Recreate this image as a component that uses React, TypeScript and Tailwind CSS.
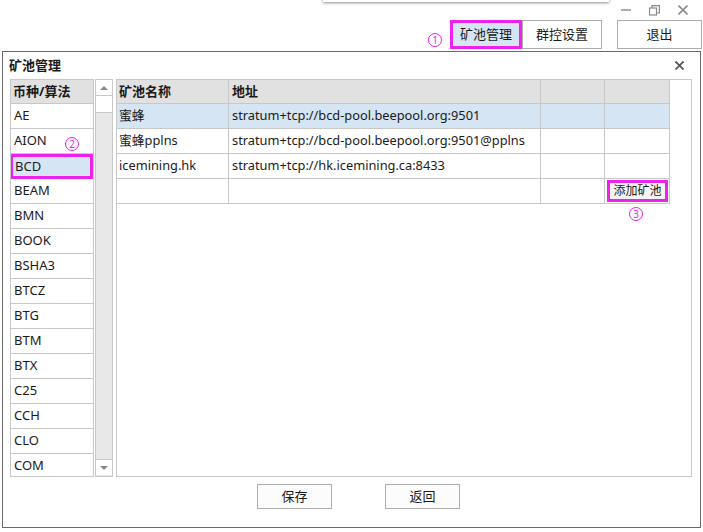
// Pool management dialog (矿池管理)

const coins = ['AE', 'AION', 'BCD', 'BEAM', 'BMN', 'BOOK', 'BSHA3', 'BTCZ', 'BTG', 'BTM', 'BTX', 'C25', 'CCH', 'CLO', 'COM']

const pools = [
  { name: '蜜蜂', url: 'stratum+tcp://bcd-pool.beepool.org:9501' },
  { name: '蜜蜂pplns', url: 'stratum+tcp://bcd-pool.beepool.org:9501@pplns' },
  { name: 'icemining.hk', url: 'stratum+tcp://hk.icemining.ca:8433' },
]

const font = "font-['Noto_Sans','Noto_Sans_CJK_SC',sans-serif]"

function Circled({ n, className }: { n: string; className: string }) {
  return (
    <span
      className={`absolute w-[14px] h-[14px] rounded-full border border-[#e81ee8] text-[#e81ee8] text-[10px] leading-[12px] text-center ${className}`}
    >
      {n}
    </span>
  )
}

export default function App() {
  return (
    <div className={`w-[703px] h-[532px] bg-white relative overflow-hidden text-[#1a1a1a] ${font}`}>
      {/* dropdown shadow from above */}
      <div className="absolute left-[323px] top-[-4px] w-[286px] h-[6px] bg-white shadow-[0_1px_3px_rgba(0,0,0,0.45)]" />

      {/* window caption controls */}
      <div className="h-[20px] flex justify-end items-center gap-[18px] pr-[15px] text-[#8a8a8a]">
        <svg width="10" height="10" viewBox="0 0 10 10">
          <line x1="0" y1="5" x2="10" y2="5" stroke="currentColor" strokeWidth="1.4" />
        </svg>
        <svg width="11" height="11" viewBox="0 0 11 11" fill="none" stroke="currentColor" strokeWidth="1.2">
          <rect x="0.5" y="3" width="7" height="7" />
          <path d="M3 3V0.6h7.4V8H7.5" />
        </svg>
        <svg width="10" height="10" viewBox="0 0 10 10" stroke="currentColor" strokeWidth="1.6">
          <line x1="0.5" y1="0.5" x2="9.5" y2="9.5" />
          <line x1="9.5" y1="0.5" x2="0.5" y2="9.5" />
        </svg>
      </div>

      {/* top buttons */}
      <div className="relative h-[31px] flex justify-end items-start pr-[1px] text-[13px]">
        <Circled n="1" className="left-[428px] top-[13px]" />
        <button className="w-[72px] h-[29px] border-[3px] border-[#ee22ee] bg-[#d5e5f3]">矿池管理</button>
        <button className="w-[80px] h-[29px] border border-[#acacac] bg-white">群控设置</button>
        <button className="ml-[15px] w-[85px] h-[29px] border border-[#acacac] bg-white">退出</button>
      </div>

      {/* dialog */}
      <div className="relative ml-[2px] w-[699px] h-[477px] border border-[#6a6a6a] bg-white flex flex-col">
        <div className="h-[27px] flex items-center justify-between pl-[6px] pr-[16px]">
          <span className="text-[13px] font-bold">矿池管理</span>
          <svg width="9" height="9" viewBox="0 0 9 9" stroke="#555" strokeWidth="1.8">
            <line x1="0.5" y1="0.5" x2="8.5" y2="8.5" />
            <line x1="8.5" y1="0.5" x2="0.5" y2="8.5" />
          </svg>
        </div>

        <div className="flex pl-[7px] h-[398px]">
          {/* coin list */}
          <div className="w-[84px] h-[398px] border border-[#c8c8c8] overflow-hidden text-[13px]">
            <div className="h-[24px] bg-[#e1e1e1] border-b border-[#c8c8c8] flex items-center pl-[2px] font-bold">
              币种/算法
            </div>
            {coins.map((c) => (
              <div
                key={c}
                className={
                  c === 'BCD'
                    ? 'h-[25px] flex items-center pl-[2px] bg-[#d5e5f3] border-[3px] border-[#ee22ee] -ml-px'
                    : 'h-[25px] flex items-center pl-[3px] border-b border-[#c8c8c8]'
                }
              >
                {c}
              </div>
            ))}
          </div>
          {/* scrollbar */}
          <div className="ml-px w-[18px] h-[398px] bg-[#e8e8e8] border border-[#c8c8c8] flex flex-col justify-between">
            <div>
              <div className="h-[16px] bg-white border-b border-[#c8c8c8] flex items-center justify-center">
                <div className="w-0 h-0 border-x-[4px] border-x-transparent border-b-[4px] border-b-[#888]" />
              </div>
              <div className="h-[17px] bg-white border-b border-[#c8c8c8]" />
            </div>
            <div className="h-[16px] bg-white border-t border-[#c8c8c8] mb-px flex items-center justify-center">
              <div className="w-0 h-0 border-x-[4px] border-x-transparent border-t-[4px] border-t-[#888]" />
            </div>
          </div>

          {/* pool table */}
          <div className="relative ml-[3px] w-[576px] h-[398px] border border-[#c8c8c8] text-[12.8px]">
            <div className="w-[553px]">
              <div className="h-[24px] flex bg-[#e1e1e1] border-b border-[#c8c8c8] font-bold text-[13px]">
                <div className="w-[112px] border-r border-[#c8c8c8] flex items-center pl-[2px]">矿池名称</div>
                <div className="w-[312px] border-r border-[#c8c8c8] flex items-center pl-[3px]">地址</div>
                <div className="w-[64px] border-r border-[#c8c8c8]" />
                <div className="w-[65px] border-r border-[#c8c8c8]" />
              </div>
              {pools.map((p, i) => (
                <div key={p.url} className={`h-[25px] flex border-b border-[#c8c8c8] ${i === 0 ? 'bg-[#d5e5f3]' : ''}`}>
                  <div className="w-[112px] border-r border-[#c8c8c8] flex items-center pl-[2px]">{p.name}</div>
                  <div className="w-[312px] border-r border-[#c8c8c8] flex items-center pl-[3px]">{p.url}</div>
                  <div className="w-[64px] border-r border-[#c8c8c8]" />
                  <div className="w-[65px] border-r border-[#c8c8c8]" />
                </div>
              ))}
              <div className="h-[25px] flex border-b border-[#c8c8c8]">
                <div className="w-[112px] border-r border-[#c8c8c8]" />
                <div className="w-[312px] border-r border-[#c8c8c8]" />
                <div className="w-[64px] border-r border-[#c8c8c8]" />
                <div className="w-[65px] border-r border-[#c8c8c8] flex items-center justify-end pr-px">
                  <button className="w-[61px] h-[22px] border-[3px] border-[#ee22ee] bg-[#f5f5f5] text-[12px] leading-none">
                    添加矿池
                  </button>
                </div>
              </div>
            </div>
            <Circled n="3" className="left-[512px] top-[127px]" />
          </div>
        </div>
        <Circled n="2" className="left-[62px] top-[85px]" />

        {/* bottom buttons */}
        <div className="flex pl-[254px] pt-[7px] gap-[53px] text-[13px]">
          <button className="w-[75px] h-[25px] border border-[#adadad] bg-[#fcfcfc]">保存</button>
          <button className="w-[75px] h-[25px] border border-[#adadad] bg-[#fcfcfc]">返回</button>
        </div>
      </div>
    </div>
  )
}
